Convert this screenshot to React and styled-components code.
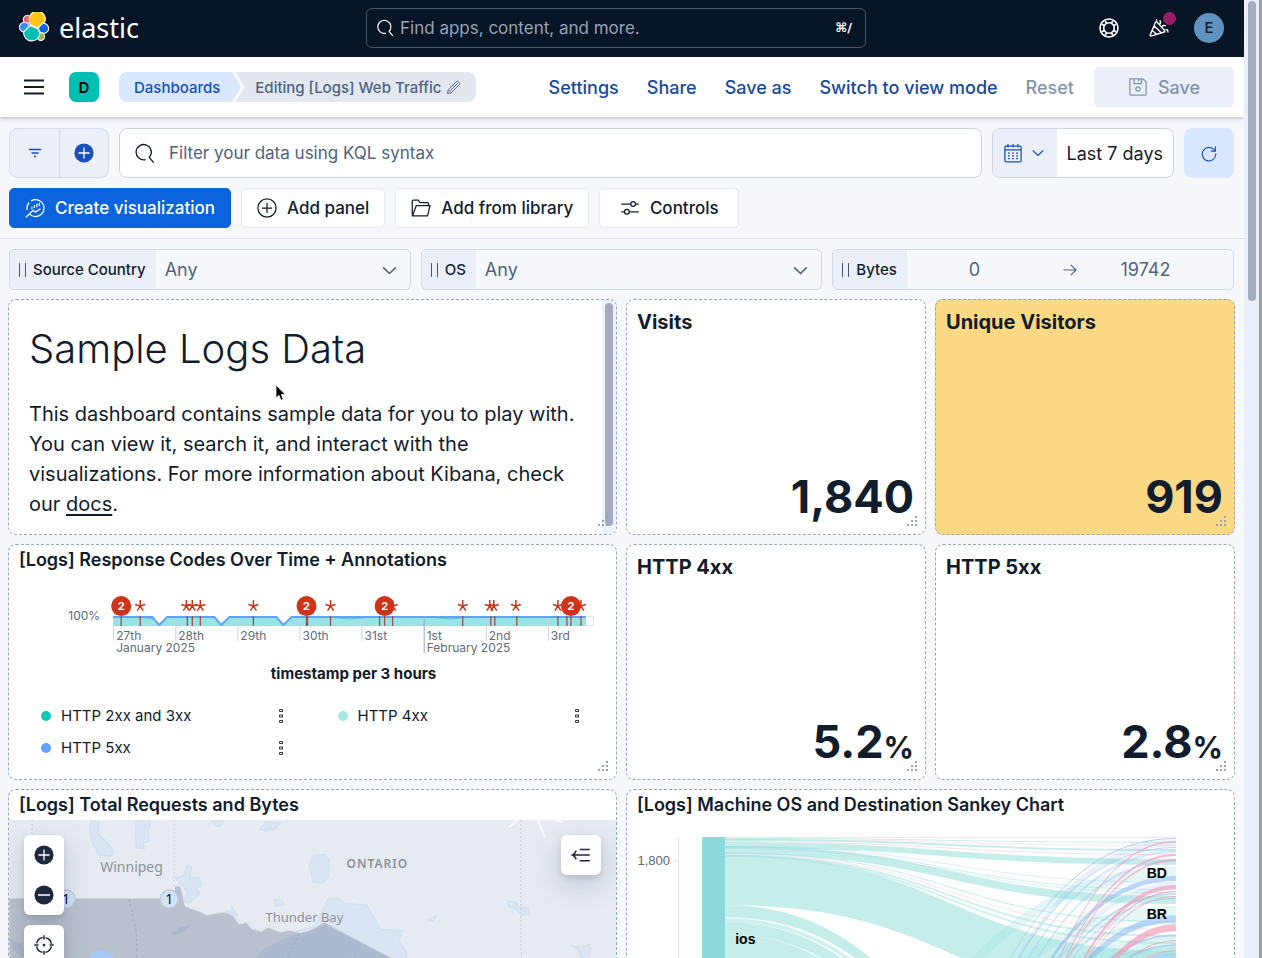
import React from "react";
import styled, { createGlobalStyle } from "styled-components";

const GlobalStyle = createGlobalStyle`
    * { box-sizing: border-box; }
    body {
        margin: 0;
        background: #f6f8fc;
        color: #111c2c;
        font-family: Inter, "Liberation Sans", sans-serif;
        font-size: 18px;
    }
    button, input, select { font: inherit; color: inherit; }
    button { cursor: pointer; }
    a { color: inherit; text-decoration: none; }
    svg { display: block; flex-shrink: 0; }
`

/* ---------- shell ---------- */
const Shell = styled.div`
    display: flex;
    height: 100vh;
    overflow: hidden;
`
const Content = styled.div`
    flex: 1;
    min-width: 0;
    overflow-y: auto;
    scrollbar-width: none;
`
const Rail = styled.div`
    width: 18px;
    padding: 1px 3px 0 4px;
    background: #e9f0fa;
    border-right: 3px solid #9a9f9f;
`
const Thumb = styled.div`
    height: ${({ $height }) => $height};
    border-radius: 4px;
    background: #a2aec0;
`

/* ---------- header ---------- */
const Header = styled.header`
    display: grid;
    grid-template-columns: 1fr minmax(0, 500px) 1fr;
    align-items: center;
    height: 57px;
    padding: 0 20px 2px 8px;
    background: #081527;
    color: #fff;
`
const Brand = styled.a`
    display: flex;
    align-items: center;
    gap: 9px;
    padding-left: 10px;
    font-family: "Noto Sans", sans-serif;
    font-size: 27px;
    line-height: 32px;
`
const GlobalSearch = styled.label`
    display: flex;
    align-items: center;
    gap: 6px;
    height: 40px;
    padding: 0 13px 0 9px;
    border: 1px solid #47536a;
    border-radius: 6px;
`
const GlobalInput = styled.input`
    flex: 1;
    min-width: 0;
    padding: 0;
    border: 0;
    outline: 0;
    background: none;
    font-size: 17px;
    &::placeholder { color: #98a2b3; opacity: 1; }
`
const Shortcut = styled.span`
    font-family: "DejaVu Sans", sans-serif;
    font-size: 13px;
    font-weight: 700;
`
const HeaderActions = styled.div`
    display: flex;
    justify-content: flex-end;
    align-items: center;
`
const HeaderButton = styled.button`
    position: relative;
    display: flex;
    align-items: center;
    justify-content: center;
    width: 50px;
    height: 40px;
    padding: 0;
    border: 0;
    background: none;
    color: #fff;
`
const NewsBadge = styled.span`
    position: absolute;
    top: 4px;
    right: 8px;
    width: 13px;
    height: 13px;
    border-radius: 50%;
    background: #9b1c66;
`
const UserAvatar = styled.span`
    width: 30px;
    height: 30px;
    margin-left: 10px;
    border-radius: 50%;
    background: #6092c0;
    color: #111c2c;
    font-size: 15px;
    font-weight: 500;
    line-height: 30px;
    text-align: center;
`

/* ---------- app menu ---------- */
const AppBar = styled.nav`
    position: relative;
    display: flex;
    align-items: center;
    height: 60px;
    padding: 0 10px 0 24px;
    background: #fff;
    box-shadow: 0 1px 3px rgba(70, 85, 110, 0.3), 0 3px 8px rgba(70, 85, 110, 0.1);
`
const MenuButton = styled.button`
    display: flex;
    padding: 0;
    border: 0;
    background: none;
`
const SpaceAvatar = styled.button`
    width: 30px;
    height: 30px;
    margin: 0 20px 0 25px;
    padding: 0;
    border: 0;
    border-radius: 7px;
    background: #00bfb3;
    color: #000;
    font-size: 15px;
    font-weight: 600;
`
const Crumb = styled.a`
    display: flex;
    align-items: center;
    height: 30px;
    padding: 0 21px 0 15px;
    border-radius: 8px 0 0 8px;
    background: #d9e8ff;
    color: #1750ba;
    font-size: 15px;
    font-weight: 500;
    white-space: nowrap;
    clip-path: polygon(0 0, calc(100% - 9px) 0, 100% 50%, calc(100% - 9px) 100%, 0 100%);
`
const CurrentCrumb = styled(Crumb)`
    gap: 5px;
    margin-left: -6px;
    padding: 0 15px 0 20px;
    border-radius: 0 8px 8px 0;
    background: #e3e8f0;
    color: #516381;
    clip-path: polygon(0 0, 100% 0, 100% 100%, 0 100%, 9px 50%);
`
const AppLinks = styled.div`
    display: flex;
    align-items: center;
    gap: 28px;
    margin-left: auto;
`
const AppLink = styled.button`
    padding: 0;
    border: 0;
    background: none;
    color: ${({ disabled }) => (disabled ? "#8593ab" : "#174a9c")};
    font-weight: 500;
    white-space: nowrap;
`
const SaveButton = styled.button`
    display: flex;
    align-items: center;
    justify-content: center;
    gap: 10px;
    width: 140px;
    height: 40px;
    margin-left: 20px;
    padding: 0;
    border: 0;
    border-radius: 5px;
    background: #ebeff7;
    color: #8393ae;
    font-weight: 500;
`

/* ---------- query bar and toolbar ---------- */
const QueryBar = styled.div`
    display: flex;
    gap: 10px;
    padding: 11px 10px 0 9px;
`
const FilterGroup = styled.div`
    display: flex;
    height: 50px;
    border: 1px solid #d3dceb;
    border-radius: 8px;
    background: #ebeff7;
    overflow: hidden;
`
const FilterButton = styled.button`
    display: flex;
    align-items: center;
    justify-content: center;
    width: 49px;
    padding: 0;
    border: 0;
    background: none;
    color: #1750ba;
    & + & { border-left: 1px solid #cdd6e4; }
`
const QueryField = styled.label`
    flex: 1;
    display: flex;
    align-items: center;
    gap: 14px;
    height: 50px;
    padding: 0 14px;
    border: 1px solid #cad3e2;
    border-radius: 8px;
    background: #fff;
`
const QueryInput = styled(GlobalInput)`
    &::placeholder { color: #516381; }
`
const DatePicker = styled.div`
    display: flex;
    height: 50px;
    border: 1px solid #cad3e2;
    border-radius: 8px;
    background: #fff;
    overflow: hidden;
`
const QuickSelect = styled.button`
    display: flex;
    align-items: center;
    gap: 8px;
    padding: 0 12px 0 10px;
    border: 0;
    background: #ebeff7;
    color: #1750ba;
`
const DateRange = styled.button`
    padding: 0 10px;
    border: 0;
    background: none;
    white-space: nowrap;
`
const RefreshButton = styled.button`
    display: flex;
    align-items: center;
    justify-content: center;
    width: 50px;
    height: 50px;
    padding: 0;
    border: 0;
    border-radius: 8px;
    background: #d9e8ff;
    color: #1750ba;
`
const Toolbar = styled.div`
    display: flex;
    gap: 10px;
    padding: 10px 9px;
    border-bottom: 1px solid #e0e6f0;
`
const ToolButton = styled.button`
    display: flex;
    align-items: center;
    justify-content: center;
    gap: 10px;
    min-width: 140px;
    height: 40px;
    padding: 0 15px;
    border: 1px solid ${({ $primary }) => ($primary ? "#0b64dd" : "#e3e8f2")};
    border-radius: 5px;
    background: ${({ $primary }) => ($primary ? "#0b64dd" : "#fff")};
    color: ${({ $primary }) => ($primary ? "#fff" : "#111c2c")};
    font-size: 17px;
    font-weight: 500;
    white-space: nowrap;
`

/* ---------- dashboard controls ---------- */
const Controls = styled.div`
    display: grid;
    grid-template-columns: repeat(3, 1fr);
    gap: 10px;
    padding: 10px 10px 9px 9px;
`
const Control = styled.div`
    position: relative;
    display: flex;
    height: 41px;
    border: 1px solid #cfd8e5;
    border-radius: 5px;
    overflow: hidden;
    color: #516381;
`
const ControlLabel = styled.label`
    display: flex;
    align-items: center;
    gap: 7px;
    padding: 0 10px 0 9px;
    background: #ebeff7;
    color: #111c2c;
    font-size: 15px;
    font-weight: 500;
    white-space: nowrap;
    &::before {
        content: "";
        width: 5px;
        height: 14px;
        border: solid #4a586f;
        border-width: 0 1px;
    }
`
const ControlSelect = styled.select`
    flex: 1;
    min-width: 0;
    padding: 0 9px;
    border: 0;
    background: none;
    appearance: none;
`
const ControlChevron = styled.span`
    position: absolute;
    top: 12px;
    right: 12px;
    pointer-events: none;
`
const RangeInput = styled.input`
    flex: 1;
    min-width: 0;
    padding: 0 20px 0 0;
    border: 0;
    background: none;
    text-align: center;
`
const RangeArrow = styled.span`
    display: flex;
    align-items: center;
`

/* ---------- panels ---------- */
const Board = styled.main`
    display: grid;
    grid-template-columns: repeat(4, 1fr);
    grid-auto-rows: minmax(236px, auto);
    gap: 9px;
    padding: 0 9px 9px 8px;
`
const Panel = styled.section`
    position: relative;
    display: flex;
    flex-direction: column;
    grid-column: span ${({ $span }) => $span || 1};
    min-width: 0;
    border: 1px dashed #98a5ba;
    border-radius: 8px;
    background: ${({ $color }) => $color || "#fff"};
    overflow: hidden;
`
const PanelTitle = styled.h2`
    margin: 0;
    padding: 0 10px;
    font-size: 18px;
    font-weight: 600;
    line-height: 30px;
    white-space: nowrap;
`
const Handle = styled.span`
    position: absolute;
    right: 7px;
    bottom: 7px;
    color: #98a2b3;
`
const MetricTitle = styled.h2`
    margin: 0;
    padding: 7px 10px;
    font-size: 20px;
    font-weight: 700;
    line-height: 30px;
`
const MetricValue = styled.div`
    margin-top: auto;
    padding: 0 11px 9px;
    font-size: 45px;
    font-weight: 700;
    line-height: 56px;
    text-align: right;
`
const MetricUnit = styled.span`
    font-size: 30px;
    line-height: 30px;
`
const Markdown = styled.div`
    padding: 19px 36px 12px 20px;
    font-size: 20px;
    line-height: 30px;
`
const MarkdownTitle = styled.h1`
    margin: 0 0 20px;
    font-size: 40px;
    font-weight: 300;
    line-height: 60px;
`
const MarkdownText = styled.p`
    margin: 0;
`
const DocsLink = styled.a`
    text-decoration: underline;
    text-underline-offset: 3px;
`
const PanelRail = styled.div`
    position: absolute;
    top: 0;
    right: 0;
    bottom: 0;
    width: 14px;
    padding: 3px 3px 8px;
    background: #edf2fa;
`
const Pointer = styled.span`
    position: absolute;
    left: 266px;
    top: 84px;
`
const ChartSvg = styled.svg`
    width: 100%;
    height: auto;
`
const Legend = styled.ul`
    display: grid;
    grid-template-columns: repeat(2, 1fr);
    margin: 0;
    padding: 9px 8px 0 6px;
    list-style: none;
    font-size: 15px;
    line-height: 32px;
`
const LegendItem = styled.li`
    display: flex;
    align-items: center;
    gap: 10px;
    padding: 0 28px 0 26px;
    &::before {
        content: "";
        width: 10px;
        height: 10px;
        border-radius: 50%;
        background: ${({ $color }) => $color};
    }
`
const LegendMenu = styled.button`
    margin-left: auto;
    padding: 0;
    border: 0;
    background: none;
`
const MapBody = styled.div`
    position: relative;
    flex: 1;
    background: #e6ebf2;
`
const MapTools = styled.div`
    position: absolute;
    top: 15px;
    ${({ $side }) => $side}: 15px;
    display: grid;
    gap: 10px;
`
const MapToolGroup = styled.div`
    border-radius: 6px;
    background: #fff;
    box-shadow: 0 3px 6px rgba(40, 55, 80, 0.14), 0 10px 28px rgba(40, 55, 80, 0.2);
`
const MapButton = styled.button`
    display: flex;
    align-items: center;
    justify-content: center;
    width: 40px;
    height: 40px;
    padding: 0;
    border: 0;
    background: none;
    color: #1d2a3e;
`

/* ---------- icons ---------- */
const shapes = {
    search: <><path d="M8.9 12.6A5.8 5.8 0 1 1 11.6 11" /><path d="M11.4 10.8 15 15" /></>,
    help: <><circle cx="8" cy="8" r="7.2" /><circle cx="8" cy="8" r="4.2" /><path d="M5 2.4l1.3 2.2M2.4 5l2.3 1.2M11 2.4 9.7 4.6M13.6 5l-2.3 1.2M5 13.6l1.3-2.2M2.4 11l2.3-1.2M11 13.6l-1.3-2.2M13.6 11l-2.3-1.2" /></>,
    cheer: <><path d="M5.3 3.2.9 13.7c-.2.5.2.9.7.8l10.600-3.300c.6-.2.7-.7.3-1.100L6.400 3.200c-.4-.4-.9-.4-1.100 0zM4.400 6.600l5.400 5.200M2.900 10.200l3.200 3" /><path d="M8.200 5.200c1.200-.8 1.300-2 .5-3.400M5.700 1.200l.9.900M10.300 7.400c.6-1.500 1.900-1.900 3.200-1M13.200 9.200c1.500-.1 2.300.7 1.800 2.400" /></>,
    pencil: <path d="M1.500 14.500l.9-4L11.300 1.600c.4-.4 1-.4 1.400 0l1.700 1.700c.4.4.4 1 0 1.400L5.500 13.600zM2.600 10.600l2.800 2.800M4.600 11.400l7.600-7.600" />,
    save: <><path d="M1.500 1.500h10.400l2.600 2.600v9.400a1 1 0 0 1-1 1h-11a1 1 0 0 1-1-1z" /><path d="M4.800 1.600v3.600h6V1.600M8.500 1.600v1.800" /><circle cx="8" cy="9.500" r="1.700" /></>,
    filter: <path d="M2 4.500h12M4.500 8h7M7 11.500h2" />,
    calendar: <><rect x="1.500" y="2.500" width="13" height="12.500" rx="1" /><path d="M1.500 5.500h13M4 .800v2.700M8 .800v2.700M12 .800v2.700" /><path d="M4 8h1.500M7.200 8h1.500M10.500 8H12M4 10.200h1.500M7.200 10.200h1.500M10.500 10.200H12M4 12.500h1.500M7.200 12.500h1.500M10.500 12.500H12" /></>,
    down: <path d="M2 5l6 5.800L14 5" />,
    refresh: <><path d="M13.300 6.200A6 6 0 1 0 14 8.500" /><path d="M13.700 2v4.300H9.500" /></>,
    lens: <><path d="M4.900 2.300A6.800 6.800 0 0 1 15.200 8 6.800 6.800 0 0 1 3.500 12.700L.8 15.400M1.700 9.500A6.800 6.800 0 0 1 3.300 3.600" /><path d="M5.500 7v2M7.500 5.500v2.500M9.500 4.500v2.800M11.500 3.800v2.500M4 12.200l2.600-2.400 1.700 1.500L12.400 8.600" /></>,
    plusCircle: <><circle cx="8" cy="8" r="7.300" /><path d="M8 4v8M4 8h8" /></>,
    folder: <path d="M1 13.500V2.500a.8.8 0 0 1 .8-.8h4l1.500 2h6a.7.7 0 0 1 .7.7v1.700M1 13.500a.8.8 0 0 0 .8.8h11.400l2-8.200H4.200L1.300 14" />,
    controls: <><path d="M1 4.800h7.500M12.500 4.800H15M1 11h2.500M7.500 11H15" /><circle cx="10.500" cy="4.800" r="1.900" /><circle cx="5.500" cy="11" r="1.900" /></>,
    right: <path d="M1.500 8h12.500M8.800 2.800 14 8l-5.200 5.200" />,
    crosshair: <><circle cx="8" cy="8" r="6" strokeDasharray="7 2.420" strokeDashoffset="-1.200" /><path d="M8 .2v3.300M8 12.500v3.300M.2 8h3.300M12.500 8h3.300" /><circle cx="8" cy="8" r=".5" fill="currentColor" /></>,
    menuLeft: <path d="M7 3.500h8M1.200 8H15M7 12.500h8M4.200 4.500C3.500 6.200 2.600 7.400 1.200 8c1.400.6 2.300 1.800 3 3.500" />,
}
const Icon = ({ name, size = 20, weight = 1 }) => (
    <svg width={size} height={size} viewBox="0 0 16 16" fill="none" stroke="currentColor" strokeWidth={weight} aria-hidden="true">
        {shapes[name]}
    </svg>
)
const FilledIcon = ({ minus }) => (
    <svg width="20" height="20" viewBox="0 0 20 20" aria-hidden="true">
        <circle cx="10" cy="10" r="9.600" fill="currentColor" />
        <path d={minus ? "M4 10h12" : "M10 4.500v11M4.500 10h11"} stroke="#fff" strokeWidth="1.300" />
    </svg>
)
const Hamburger = () => (
    <svg width="20" height="16" viewBox="0 0 20 16" stroke="#111c2c" strokeWidth="2" aria-hidden="true">
        <path d="M0 1.500h20M0 8h20M0 14.500h20" />
    </svg>
)
const Logo = () => (
    <svg width="32" height="32" viewBox="0 0 32 32" stroke="#fff" strokeWidth="1.100" aria-hidden="true">
        <circle cx="9.200" cy="7.400" r="3.900" fill="#ee5f6c" />
        <circle cx="6.400" cy="15.200" r="5" fill="#3b8ef0" />
        <circle cx="25.600" cy="16.400" r="5" fill="#0b64dd" />
        <circle cx="22.800" cy="24.600" r="3.800" fill="#9bb63a" />
        <path d="M12 12.400 19.500 16l7.300-6.200A8 8 0 1 0 11.300 7.600z" fill="#fec514" />
        <path d="M12 13.600 20 17l2.100 4.300A8.200 8.200 0 1 1 5.600 20z" fill="#00bfb3" />
    </svg>
)
const Dots = () => (
    <svg width="12" height="12" viewBox="0 0 12 12" fill="currentColor" aria-hidden="true">
        <path d="M9 1h2v2H9zM9 5h2v2H9zM9 9h2v2H9zM5 5h2v2H5zM5 9h2v2H5zM1 9h2v2H1z" />
    </svg>
)
const Boxes = () => (
    <svg width="6" height="16" viewBox="0 0 6 16" fill="none" stroke="#343741" aria-hidden="true">
        <path d="M1.500 1.500h3v2h-3zM1.500 7h3v2h-3zM1.500 12.500h3v2h-3z" />
    </svg>
)

/* ---------- response codes chart ---------- */
const days = [
    ["27th", 104], ["28th", 166], ["29th", 228], ["30th", 290],
    ["31st", 352], ["1st", 414], ["2nd", 476], ["3rd", 538],
]
const stars = [131, 177, 183, 191, 244, 321, 383, 453, 480, 484, 506, 548, 571]
const events = [112, 131, 178, 183, 191, 244, 297, 298, 321, 370, 375, 383, 453, 481, 485, 507, 548, 557, 561, 571]
const bubbles = [112, 297, 375, 561]
const star = x => `M${x} 31v-6M${x} 31l-5-1.500M${x} 31l5-1.500M${x} 31l-3 4.500M${x} 31l3 4.500`

const ResponseChart = () => (
    <ChartSvg viewBox="0 0 606 116" role="img" aria-label="Response codes over time" fontFamily="Inter, sans-serif">
        <text x="91" y="45" fontSize="12" fill="#646a77" textAnchor="end">100%</text>
        <path d="M104 41.500h479.500v9H104z" fill="#fff" stroke="#dfe4ec" />
        <path d="M104 41h472v10H104z" fill="#98e4e0" />
        <path d="M130 42l14 2 14-2M318 42l22 2 22-2M420 42l20 2 24-2" fill="none" stroke="#53c9c6" />
        <path d="M143 41l7 9 8-9zM205 41l7 9 8-9zM267 41l7 9 8-9z" fill="#fff" />
        <path d="M104 42h39l7 8 8-8h47l7 8 8-8h47l7 8 8-8h294" fill="none" stroke="#61a2ff" strokeWidth="2" />
        {days.map(([day, x]) => (
            <g key={day}>
                <path d={`M${x + .5} 44v${day === "1st" ? 34 : 22}`} stroke={day === "1st" ? "#9aa3b2" : "#cdd3dc"} />
                <text x={x + 3} y="65" fontSize="12" fill="#646a77">{day}</text>
            </g>
        ))}
        <text x="107" y="77" fontSize="12" fill="#646a77">January 2025</text>
        <text x="417" y="77" fontSize="12" fill="#646a77">February 2025</text>
        {events.map((x, i) => <path key={i} d={`M${x} 41v10`} stroke="#9a5248" strokeWidth="1.300" />)}
        {stars.map(x => <path key={x} d={star(x)} stroke="#c4351c" strokeWidth="1.500" />)}
        {bubbles.map(x => (
            <g key={x}>
                <circle cx={x} cy="31" r="10" fill="#cc3519" />
                <text x={x} y="35" fontSize="11" fontWeight="700" fill="#fff" textAnchor="middle">2</text>
            </g>
        ))}
        <text x="344" y="104" fontSize="15" fontWeight="700" fill="#111c2c" textAnchor="middle">timestamp per 3 hours</text>
    </ChartSvg>
)

/* ---------- map ---------- */
const RegionMap = () => (
    <ChartSvg viewBox="0 0 606 205" role="img" aria-label="Map of requests" fontFamily="'Noto Sans', sans-serif">
        <g fill="#d9e5f2" stroke="#cfdff0">
            <path d="M82 0l8 2-1 12 9 8 7 10-3 4-12-1-7-13-2-12zM127 0h14l-2 12 1 9-6 2 1 6-8-1-1-16zM202 0h12l-1 5-5 2zM250 9l7-7 14 1-6 6-9 2z" />
            <path d="M166 58l8-2 4-11 4 2-1 11 9-1 2 9-5 2 4 5-11 10-5-2 3-10z" />
            <path d="M303 36l12-2 5 6-1 17-7 7-9-3-3-15zM265 79l8 1 1 5-8 1zM217 90l7 5-3 3zM222 86l6 9-4 4-3-7z" />
            <path d="M498 81l8 1 3 5 9 1 2 6-8 1-6-6-7-2zM561 125l10 2 9-3v11l-8 3-4-8zM418 100l9-5-4 6z" />
            <path d="M318 79l10-1 8 5 21 2 9 15 5 9 22 1-4 11 8 11-3 72H240l-4-80 70-18z" />
        </g>
        <path d="M528 0l7 17M508 0l-9 7M545 0l8 2" stroke="#f8faff" strokeWidth="2" fill="none" />
        <path d="M165 0v66M23 0v70M511 0v124l3 81" stroke="#c9cdd4" strokeDasharray="2 2" fill="none" />
        <path d="M0 78h165V66h6l3 11 2 9 7 3 9 3 6 3 8-2 10-1 8 4 6 8 7-2 6 7 9 2 7-4 12 5 9-2 13 3 11-5 11-6 68 36 40 62H0z" fill="#b9c1ce" stroke="#dce2eb" />
        <path d="M246 138l8-9 22-11 18-6 11-2 10-6 66 35v66H244z" fill="#acb9d0" />
        <path d="M120 79l7 32 2 94M290 113l-12 25-14 67M330 149l8-10 8-2" stroke="#a2acbe" strokeDasharray="3 2" fill="none" />
        <path d="M162 113l8-6 11-2-7 7-9 3zM0 118l12 6 8 10-7 3-10-8z" fill="#abb8cc" />
        <g fill="#8c919c" fontSize="14">
            <text x="91" y="52">Winnipeg</text>
            <text x="256" y="102" fontSize="13">Thunder Bay</text>
            <text x="337" y="48" fontSize="12" fontWeight="600" letterSpacing="1">ONTARIO</text>
        </g>
        <circle cx="92" cy="146" r="16" fill="#a9c9f5" />
        {[57, 160].map(x => (
            <g key={x}>
                <circle cx={x} cy="79" r="9" fill="#d2e2fa" stroke="#c0c9d8" strokeWidth="1.500" />
                <text x={x} y="84" fontSize="14" textAnchor="middle" fill="#111">1</text>
            </g>
        ))}
    </ChartSvg>
)

/* ---------- sankey ---------- */
const X0 = 98
const X1 = 548
const ribbon = (from, to, size) => {
    const mid = (X0 + X1) / 2
    return `M${X0} ${from}C${mid} ${from} ${mid} ${to} ${X1} ${to}v${size}C${mid} ${to + size} ${mid} ${from + size} ${X0} ${from + size}z`
}
const TEAL = "#9fe2de"
const BLUE = "#8db8f2"
const PINK = "#f39ab4"
// [source y, target y, thickness, colour, opacity]
const links = [
    [5, 22, 6, TEAL, .6], [9, 59, 8, TEAL, .6], [18, 114, 50, TEAL, .6],
    [68, 347, 12, TEAL, .6], [81, 380, 4, TEAL, .5], [85, 400, 12, TEAL, .6], [97, 430, 100, TEAL, .6],
    [0, 0, 1, PINK, .25], [1, 5, 1, TEAL, .6], [2, 8, 1, PINK, .25], [2, 12, 2, TEAL, .6],
    [4, 17, 1, PINK, .3], [9, 45, 1, BLUE, .25], [10, 52, 1, TEAL, .5], [11, 55, 1, TEAL, .4],
    [15, 84, 1, TEAL, .6], [16, 92, 1, PINK, .25], [17, 98, 2, TEAL, .5], [18, 105, 2, TEAL, .5],
    [250, 30, 12, TEAL, .28], [300, 69, 12, TEAL, .28], [320, 100, 14, TEAL, .35],
    [380, 84, 3, TEAL, .4], [420, 110, 8, TEAL, .5],
    [470, 1, 1, BLUE, .7], [510, 3, 6, BLUE, .2], [500, 10, 1, BLUE, .6], [560, 13, 3, BLUE, .3], [600, 22, 3, BLUE, .3],
    [640, 39, 5, BLUE, .55], [670, 46, 6, BLUE, .2], [700, 56, 2, BLUE, .5], [740, 61, 1, BLUE, .6],
    [760, 78, 7, BLUE, .55], [810, 97, 2, BLUE, .5], [850, 107, 2, BLUE, .5], [880, 116, 5, BLUE, .4],
    [1020, 4, 1, PINK, .9], [1040, 17, 2, PINK, .7], [1070, 22, 2, PINK, .6], [1110, 48, 4, PINK, .65],
    [1130, 54, 1, PINK, .8], [1150, 59, 1, PINK, .7], [1190, 87, 7, PINK, .65], [1230, 103, 1, PINK, .7], [1260, 113, 1, PINK, .7],
]
const Sankey = () => (
    <ChartSvg viewBox="0 0 606 190" role="img" aria-label="Machine OS to destination" fontFamily="'Liberation Sans', Arial, sans-serif">
        <path d="M51.500 0v190M46 24h5" stroke="#dfe4ed" />
        <text x="43" y="28" fontSize="13" fill="#5a6678" textAnchor="end">1,800</text>
        {links.map(([from, to, size, color, opacity], i) => (
            <path key={i} d={ribbon(from, to, size)} fill={color} fillOpacity={opacity} />
        ))}
        <path d="M75 0h23v190H75z" fill="#8dd8da" />
        <g fill="#000" fontSize="14" fontWeight="700">
            <text x="108" y="107">ios</text>
            <text x="539" y="41" textAnchor="end">BD</text>
            <text x="539" y="82" textAnchor="end">BR</text>
        </g>
    </ChartSvg>
)
const SankeyBody = styled.div`
    margin-top: 17px;
`

const Metric = ({ title, value, unit, color }) => (
    <Panel $color={color}>
        <MetricTitle>{title}</MetricTitle>
        <MetricValue>{value}{unit && <MetricUnit>{unit}</MetricUnit>}</MetricValue>
        <Handle><Dots /></Handle>
    </Panel>
)

const OptionsControl = ({ id, label }) => (
    <Control>
        <ControlLabel htmlFor={id}>{label}</ControlLabel>
        <ControlSelect id={id}><option>Any</option></ControlSelect>
        <ControlChevron><Icon name="down" size={17} weight={1.5} /></ControlChevron>
    </Control>
)

const legend = [
    ["HTTP 2xx and 3xx", "#16c5b8"],
    ["HTTP 4xx", "#a6e8e2"],
    ["HTTP 5xx", "#61a2ff"],
]

const App = () => {
    return (
        <>
            <GlobalStyle />
            <Shell>
                <Content>
                    <Header>
                        <Brand href="#"><Logo />elastic</Brand>
                        <GlobalSearch>
                            <Icon name="search" size={18} />
                            <GlobalInput aria-label="Find apps, content, and more." placeholder="Find apps, content, and more." />
                            <Shortcut>⌘/</Shortcut>
                        </GlobalSearch>
                        <HeaderActions>
                            <HeaderButton aria-label="Help"><Icon name="help" weight={1.3} /></HeaderButton>
                            <HeaderButton aria-label="News"><Icon name="cheer" weight={1.1} /><NewsBadge /></HeaderButton>
                            <UserAvatar>E</UserAvatar>
                        </HeaderActions>
                    </Header>
                    <AppBar>
                        <MenuButton aria-label="Menu"><Hamburger /></MenuButton>
                        <SpaceAvatar>D</SpaceAvatar>
                        <Crumb href="#">Dashboards</Crumb>
                        <CurrentCrumb href="#">Editing [Logs] Web Traffic <Icon name="pencil" size={15} /></CurrentCrumb>
                        <AppLinks>
                            <AppLink>Settings</AppLink>
                            <AppLink>Share</AppLink>
                            <AppLink>Save as</AppLink>
                            <AppLink>Switch to view mode</AppLink>
                            <AppLink disabled>Reset</AppLink>
                        </AppLinks>
                        <SaveButton disabled><Icon name="save" />Save</SaveButton>
                    </AppBar>
                    <QueryBar>
                        <FilterGroup>
                            <FilterButton aria-label="Saved queries"><Icon name="filter" size={16} weight={1.3} /></FilterButton>
                            <FilterButton aria-label="Add filter"><FilledIcon /></FilterButton>
                        </FilterGroup>
                        <QueryField>
                            <Icon name="search" size={21} />
                            <QueryInput aria-label="Filter your data using KQL syntax" placeholder="Filter your data using KQL syntax" />
                        </QueryField>
                        <DatePicker>
                            <QuickSelect aria-label="Quick select"><Icon name="calendar" /><Icon name="down" size={14} weight={1.5} /></QuickSelect>
                            <DateRange>Last 7 days</DateRange>
                        </DatePicker>
                        <RefreshButton aria-label="Refresh"><Icon name="refresh" size={18} /></RefreshButton>
                    </QueryBar>
                    <Toolbar>
                        <ToolButton $primary><Icon name="lens" />Create visualization</ToolButton>
                        <ToolButton><Icon name="plusCircle" />Add panel</ToolButton>
                        <ToolButton><Icon name="folder" />Add from library</ToolButton>
                        <ToolButton><Icon name="controls" />Controls</ToolButton>
                    </Toolbar>
                    <Controls>
                        <OptionsControl id="country" label="Source Country" />
                        <OptionsControl id="os" label="OS" />
                        <Control>
                            <ControlLabel htmlFor="bytes">Bytes</ControlLabel>
                            <RangeInput id="bytes" defaultValue="0" />
                            <RangeArrow><Icon name="right" size={16} weight={1.2} /></RangeArrow>
                            <RangeInput aria-label="Maximum bytes" defaultValue="19742" />
                        </Control>
                    </Controls>
                    <Board>
                        <Panel $span={2}>
                            <Markdown>
                                <MarkdownTitle>Sample Logs Data</MarkdownTitle>
                                <MarkdownText>
                                    This dashboard contains sample data for you to play with. You can view it, search it, and interact with the visualizations. For more information about Kibana, check our <DocsLink href="#">docs</DocsLink>.
                                </MarkdownText>
                            </Markdown>
                            <PanelRail><Thumb $height="100%" /></PanelRail>
                            <Handle><Dots /></Handle>
                            <Pointer>
                                <svg width="12" height="18" viewBox="0 0 12 18" aria-hidden="true">
                                    <path d="M1 1v13l3-2.700 2 5 2.300-1-2-4.700h4z" fill="#000" stroke="#fff" strokeWidth=".8" />
                                </svg>
                            </Pointer>
                        </Panel>
                        <Metric title="Visits" value="1,840" />
                        <Metric title="Unique Visitors" value="919" color="#fbd883" />
                        <Panel $span={2}>
                            <PanelTitle>[Logs] Response Codes Over Time + Annotations</PanelTitle>
                            <ResponseChart />
                            <Legend>
                                {legend.map(([label, color]) => (
                                    <LegendItem key={label} $color={color}>
                                        {label}
                                        <LegendMenu aria-label={`${label} actions`}><Boxes /></LegendMenu>
                                    </LegendItem>
                                ))}
                            </Legend>
                            <Handle><Dots /></Handle>
                        </Panel>
                        <Metric title="HTTP 4xx" value="5.2" unit="%" />
                        <Metric title="HTTP 5xx" value="2.8" unit="%" />
                        <Panel $span={2}>
                            <PanelTitle>[Logs] Total Requests and Bytes</PanelTitle>
                            <MapBody>
                                <RegionMap />
                                <MapTools $side="left">
                                    <MapToolGroup>
                                        <MapButton aria-label="Zoom in"><FilledIcon /></MapButton>
                                        <MapButton aria-label="Zoom out"><FilledIcon minus /></MapButton>
                                    </MapToolGroup>
                                    <MapToolGroup>
                                        <MapButton aria-label="Fit to data"><Icon name="crosshair" weight={1.2} /></MapButton>
                                    </MapToolGroup>
                                </MapTools>
                                <MapTools $side="right">
                                    <MapToolGroup>
                                        <MapButton aria-label="Expand layers"><Icon name="menuLeft" weight={1.2} /></MapButton>
                                    </MapToolGroup>
                                </MapTools>
                            </MapBody>
                        </Panel>
                        <Panel $span={2}>
                            <PanelTitle>[Logs] Machine OS and Destination Sankey Chart</PanelTitle>
                            <SankeyBody><Sankey /></SankeyBody>
                        </Panel>
                    </Board>
                </Content>
                <Rail><Thumb $height="300px" /></Rail>
            </Shell>
        </>
    );
}
export default App;
